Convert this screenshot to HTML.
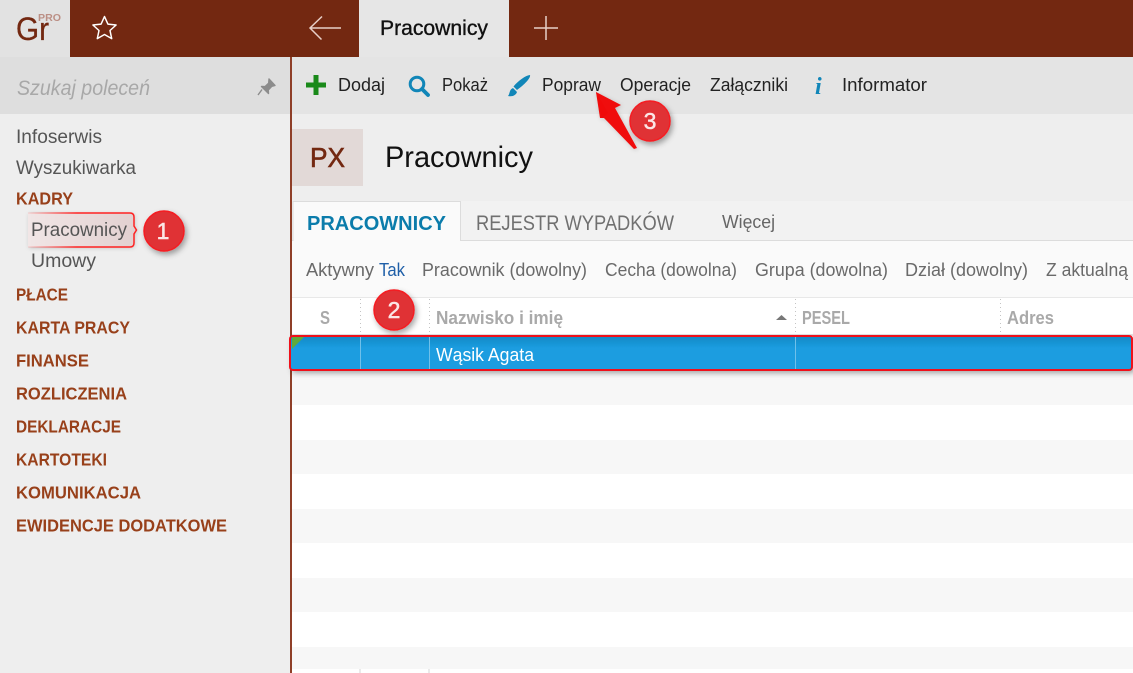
<!DOCTYPE html>
<html lang="pl"><head><meta charset="utf-8"><title>Pracownicy</title>
<style>
html,body{margin:0;padding:0;width:1133px;height:673px;overflow:hidden;background:#fff}
svg{display:block}
text{font-family:"Liberation Sans",sans-serif}
.m{fill:#555;font-size:19.500px}
.h{fill:#98401a;font-size:17.500px;font-weight:bold}
.t{fill:#222;font-size:18.500px}
.f{fill:#6a6a6a;font-size:18.500px}
.c{fill:#a9a9a9;font-size:18.500px;font-weight:bold}
</style></head><body>
<svg width="1133" height="673" viewBox="0 0 1133 673" xmlns="http://www.w3.org/2000/svg">
<defs>
<filter id="s" x="-30%" y="-30%" width="170%" height="170%"><feDropShadow dx="2" dy="3" stdDeviation="3" flood-color="#000" flood-opacity=".35"/></filter>
<filter id="s2" x="-10%" y="-30%" width="120%" height="170%"><feDropShadow dx="1" dy="1" stdDeviation="2" flood-color="#000" flood-opacity=".18"/></filter>
<linearGradient id="pg" x1="0" x2="1"><stop offset="0" stop-color="#f1e6e6"/><stop offset="1" stop-color="#e2d0d0"/></linearGradient>
<linearGradient id="pl" x1="0" x2="1"><stop offset="0" stop-color="#f22" stop-opacity=".1"/><stop offset=".45" stop-color="#f22"/></linearGradient>
<linearGradient id="rg" x1="0" x2="0" y1="0" y2="1"><stop offset="0" stop-color="#1788c4"/><stop offset=".35" stop-color="#1a9de0"/><stop offset="1" stop-color="#1a9de0"/></linearGradient>
</defs>
<!-- backgrounds -->
<rect width="1133" height="673" fill="#fff"/>
<rect y="0" width="1133" height="57" fill="#732811"/>
<rect width="70" height="57" fill="#e2e2e2"/>
<rect x="359" width="150" height="57" fill="#e6e6e6"/>
<rect y="57" width="290" height="57" fill="#dedede"/>
<rect y="114" width="290" height="559" fill="#eee"/>
<rect x="292" y="57" width="841" height="57" fill="#e4e4e4"/>
<rect x="292" y="114" width="841" height="87" fill="#eee"/>
<rect x="290" y="57" width="2" height="616" fill="#8f3f28"/>
<!-- logo -->
<text x="16" y="40" font-size="32" fill="#732811" stroke="#732811" stroke-width=".3" textLength="33" lengthAdjust="spacingAndGlyphs">Gr</text>
<text x="38" y="21" font-size="10.500" font-weight="bold" fill="#bb8f85" textLength="23" lengthAdjust="spacingAndGlyphs">PRO</text>
<path d="M104.500 16.500l3.400 7.600 8.200.9-6.100 5.500 1.700 8.100-7.200-4.100-7.200 4.100 1.700-8.100-6.100-5.500 8.200-.9z" fill="none" stroke="#fff" stroke-width="1.500" stroke-linejoin="round"/>
<path d="M310 28h31M322 16.500L310 28l11.500 11.500" fill="none" stroke="#e8cfc8" stroke-width="1.500"/>
<path d="M534 28h24M546 16v24" fill="none" stroke="#e8cfc8" stroke-width="1.500"/>
<text x="380" y="35" font-size="21" fill="#111" stroke="#111" stroke-width=".35" textLength="108" lengthAdjust="spacingAndGlyphs">Pracownicy</text>
<!-- search -->
<text x="17" y="95" font-size="21.500" font-style="italic" fill="#a8a8a8" textLength="133" lengthAdjust="spacingAndGlyphs">Szukaj poleceń</text>
<path d="M269 79l6 6.500-3.200.8-3.500 3.700.2 3.500-7-7 3.500.1 3.700-3.500zM262 89.500L258 95" fill="#8c8c8c" stroke="#8c8c8c" stroke-width="1.400" stroke-linejoin="round"/>
<!-- sidebar -->
<text class="m" x="16" y="143" textLength="86" lengthAdjust="spacingAndGlyphs">Infoserwis</text>
<text class="m" x="16" y="174" textLength="120" lengthAdjust="spacingAndGlyphs">Wyszukiwarka</text>
<text class="h" x="16" y="204.500" textLength="57" lengthAdjust="spacingAndGlyphs">KADRY</text>
<path d="M28 213H130q4 0 4 4v9l2.500 4-2.500 4v9q0 4-4 4H28z" fill="url(#pg)" filter="url(#s2)"/>
<path d="M28 213H130q4 0 4 4v9l2.500 4-2.500 4v9q0 4-4 4H28" fill="none" stroke="url(#pl)" stroke-width="1.500"/>
<text class="m" x="31" y="236" textLength="96" lengthAdjust="spacingAndGlyphs">Pracownicy</text>
<text class="m" x="31" y="267" textLength="65" lengthAdjust="spacingAndGlyphs">Umowy</text>
<text class="h" x="16" y="300.500" textLength="52" lengthAdjust="spacingAndGlyphs">PŁACE</text>
<text class="h" x="16" y="333.500" textLength="114" lengthAdjust="spacingAndGlyphs">KARTA PRACY</text>
<text class="h" x="16" y="366.500" textLength="73" lengthAdjust="spacingAndGlyphs">FINANSE</text>
<text class="h" x="16" y="399.500" textLength="111" lengthAdjust="spacingAndGlyphs">ROZLICZENIA</text>
<text class="h" x="16" y="432.500" textLength="105" lengthAdjust="spacingAndGlyphs">DEKLARACJE</text>
<text class="h" x="16" y="465.500" textLength="91" lengthAdjust="spacingAndGlyphs">KARTOTEKI</text>
<text class="h" x="16" y="498.500" textLength="125" lengthAdjust="spacingAndGlyphs">KOMUNIKACJA</text>
<text class="h" x="16" y="531.500" textLength="211" lengthAdjust="spacingAndGlyphs">EWIDENCJE DODATKOWE</text>
<!-- toolbar -->
<path d="M316 75v20M306 85h20" stroke="#1a8a1a" stroke-width="5"/>
<text class="t" x="338" y="91" textLength="47" lengthAdjust="spacingAndGlyphs">Dodaj</text>
<circle cx="417" cy="84" r="6.800" fill="none" stroke="#1186b8" stroke-width="3"/>
<path d="M422 89l6 6" stroke="#1186b8" stroke-width="3.800" stroke-linecap="round"/>
<text class="t" x="442" y="91" textLength="46" lengthAdjust="spacingAndGlyphs">Pokaż</text>
<path d="M530 75c1 3-6 10-13 15l-3.500-3.500c5-6 12-11 16.500-11.500zM513 88l4 4c-1 3-4 5-9 4 2-2 1-6.500 5-8z" fill="#1186b8"/>
<text class="t" x="542" y="91" textLength="59" lengthAdjust="spacingAndGlyphs">Popraw</text>
<text class="t" x="620" y="91" textLength="71" lengthAdjust="spacingAndGlyphs">Operacje</text>
<text class="t" x="710" y="91" textLength="78" lengthAdjust="spacingAndGlyphs">Załączniki</text>
<text x="815" y="94" font-size="24" font-weight="bold" font-style="italic" fill="#1186b8" style="font-family:'Liberation Serif',serif">i</text>
<text class="t" x="842" y="91" textLength="85" lengthAdjust="spacingAndGlyphs">Informator</text>
<!-- title -->
<rect x="292" y="129" width="71" height="57" fill="#e2d9d7"/>
<text x="310" y="167" font-size="28" fill="#732811" stroke="#732811" stroke-width=".6" textLength="35" lengthAdjust="spacingAndGlyphs">PX</text>
<text x="385" y="167" font-size="29.500" fill="#111" textLength="148" lengthAdjust="spacingAndGlyphs">Pracownicy</text>
<!-- tabs -->
<rect x="292" y="201" width="841" height="40" fill="#f2f2f2"/>
<rect x="292" y="240" width="841" height="1" fill="#dcdcdc"/>
<rect x="292" y="241" width="841" height="56" fill="#fafafa"/>
<path d="M293 241V201.500H460.500V241" fill="#fafafa" stroke="#dcdcdc"/>
<text x="307" y="230" font-size="20.500" font-weight="bold" fill="#0b7cab" textLength="139" lengthAdjust="spacingAndGlyphs">PRACOWNICY</text>
<text x="476" y="230" font-size="21" fill="#707070" textLength="198" lengthAdjust="spacingAndGlyphs">REJESTR WYPADKÓW</text>
<text x="722" y="228" font-size="18" fill="#666" textLength="53" lengthAdjust="spacingAndGlyphs">Więcej</text>
<!-- filters -->
<text class="f" x="306" y="276" textLength="68" lengthAdjust="spacingAndGlyphs">Aktywny</text>
<text class="f" x="379" y="276" style="fill:#1f5fa8" textLength="26" lengthAdjust="spacingAndGlyphs">Tak</text>
<text class="f" x="422" y="276" textLength="165" lengthAdjust="spacingAndGlyphs">Pracownik (dowolny)</text>
<text class="f" x="605" y="276" textLength="132" lengthAdjust="spacingAndGlyphs">Cecha (dowolna)</text>
<text class="f" x="755" y="276" textLength="133" lengthAdjust="spacingAndGlyphs">Grupa (dowolna)</text>
<text class="f" x="905" y="276" textLength="123" lengthAdjust="spacingAndGlyphs">Dział (dowolny)</text>
<text class="f" x="1046" y="276" textLength="82" lengthAdjust="spacingAndGlyphs">Z aktualną</text>
<!-- header -->
<rect x="292" y="297" width="841" height="39" fill="#fff"/>
<rect x="292" y="297" width="841" height="1" fill="#e8e8e8"/>
<rect x="292" y="334" width="841" height="2" fill="#e2e2e2"/>
<path d="M360.500 299v35M429.500 299v35M795.500 299v35M1000.500 299v35" stroke="#c4c4c4" stroke-dasharray="1 3"/>
<text class="c" x="320" y="324" textLength="10" lengthAdjust="spacingAndGlyphs">S</text>
<text class="c" x="436" y="324" textLength="127" lengthAdjust="spacingAndGlyphs">Nazwisko i imię</text>
<path d="M776 320l5.500-5 5.500 5z" fill="#777"/>
<text class="c" x="802" y="324" textLength="48" lengthAdjust="spacingAndGlyphs">PESEL</text>
<text class="c" x="1007" y="324" textLength="47" lengthAdjust="spacingAndGlyphs">Adres</text>
<!-- rows -->
<rect x="292" y="370" width="841" height="35" fill="#f7f7f7"/>
<rect x="292" y="440" width="841" height="34" fill="#f7f7f7"/>
<rect x="292" y="509" width="841" height="34" fill="#f7f7f7"/>
<rect x="292" y="578" width="841" height="34" fill="#f7f7f7"/>
<rect x="292" y="647" width="841" height="22" fill="#f7f7f7"/>
<path d="M360 669v4M429 669v4" stroke="#e4e4e4" stroke-width="1.500"/>
<rect x="290" y="336" width="843" height="34" rx="3" fill="url(#rg)" filter="url(#s)"/>
<path d="M360.500 337v32M429.500 337v32M795.500 337v32" stroke="#6fc0ea"/>
<path d="M292 337h12l-12 12z" fill="#5faa3c"/>
<rect x="290" y="336" width="842" height="34" rx="3" fill="none" stroke="#f0101a" stroke-width="2"/>
<text x="436" y="361" font-size="18.500" fill="#fff" textLength="98" lengthAdjust="spacingAndGlyphs">Wąsik Agata</text>
<!-- callouts -->
<g filter="url(#s)" fill="#e03236" stroke="#f51c20" stroke-width="1.500">
<circle cx="164" cy="231" r="20"/>
<circle cx="394" cy="310" r="20"/>
<circle cx="650" cy="121" r="20"/>
</g>
<path d="M596 92l25 13-6 3 22 40-3 1-30-31-3 0-1 0z" fill="#f00a0a" filter="url(#s2)"/>
<path d="M596 92l12 21-6 5z" fill="#f00a0a"/>
<g font-size="23" fill="#fbe6e6" stroke="#fbe6e6" stroke-width=".5" text-anchor="middle">
<text x="163" y="239">1</text>
<text x="394" y="318">2</text>
<text x="650" y="129">3</text>
</g>
</svg>
</body></html>
